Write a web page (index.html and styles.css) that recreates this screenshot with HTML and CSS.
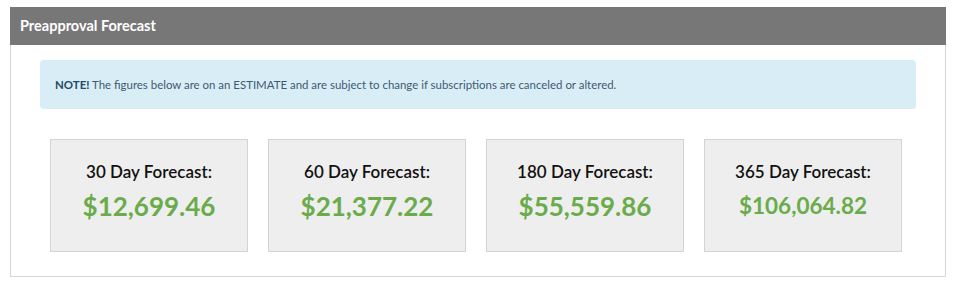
FILE: index.html
```html
<!DOCTYPE html>
<html lang="en">
<head>
    <meta charset="UTF-8">
    <title>Preapproval Forecast</title>
    <link rel="stylesheet" href="styles.css">
</head>
<body>
    <div class="panel">
        <div class="panel-heading">Preapproval Forecast</div>
        <div class="panel-body">
            <div class="alert">
                <strong>NOTE!</strong> The figures below are on an ESTIMATE and are subject to change if subscriptions are canceled or altered.
            </div>
            <div class="forecasts">
                <div class="forecast">
                    <div class="forecast-label">30 Day Forecast:</div>
                    <div class="forecast-amount">$12,699.46</div>
                </div>
                <div class="forecast">
                    <div class="forecast-label">60 Day Forecast:</div>
                    <div class="forecast-amount">$21,377.22</div>
                </div>
                <div class="forecast">
                    <div class="forecast-label">180 Day Forecast:</div>
                    <div class="forecast-amount">$55,559.86</div>
                </div>
                <div class="forecast">
                    <div class="forecast-label">365 Day Forecast:</div>
                    <div class="forecast-amount small">$106,064.82</div>
                </div>
            </div>
        </div>
    </div>
</body>
</html>
```

FILE: styles.css
```css
body {
    font-family: Lato, "Open Sans", sans-serif;
    margin: 0;
    padding: 0;
    color: #222;
    background: #fff;
}
.panel {
    width: 934px;
    margin: 7px 0 0 10px;
    border: 1px solid #d6d6d6;
    border-top: none;
}
.panel-heading {
    background-color: #777;
    color: #fff;
    font-weight: bold;
    font-size: 14.5px;
    height: 38px;
    line-height: 38px;
    padding: 0 10px;
    margin: 0 -1px;
}
.panel-body {
    padding: 15px 29px 24px 29px;
}
.alert {
    background-color: #d9edf7;
    color: #3d5b70;
    font-size: 11.45px;
    height: 49px;
    line-height: 50px;
    padding: 0 15px;
    border-radius: 4px;
}
.alert strong {
    color: #1f4a66;
}
.forecasts {
    display: flex;
    gap: 20px;
    margin: 30px 0 0 10px;
}
.forecast {
    width: 196px;
    height: 111px;
    background-color: #eee;
    border: 1px solid #d4d4d4;
    text-align: center;
}
.forecast-label {
    font-size: 17px;
    font-weight: 600;
    margin-top: 21px;
    color: #111;
}
.forecast-amount {
    font-size: 26px;
    font-weight: bold;
    color: #6aab4b;
    margin-top: 8px;
}
.forecast-amount.small {
    font-size: 22.5px;
    margin-top: 10px;
}
```
